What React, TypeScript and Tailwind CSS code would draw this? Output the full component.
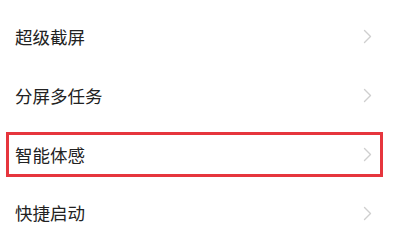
import React from 'react';

const items = [
  { label: '超级截屏', active: false },
  { label: '分屏多任务', active: false },
  { label: '智能体感', active: true },
  { label: '快捷启动', active: false },
];

function Chevron() {
  return (
    <svg width="9" height="15" viewBox="0 0 9 15" fill="none" className="shrink-0">
      <path d="M1.5 1.5 L7.5 7.5 L1.5 13.5" stroke="#cfcfcf" strokeWidth="1.4" strokeLinecap="round" strokeLinejoin="round" />
    </svg>
  );
}

export default function App() {
  return (
    <div
      className="w-[402px] h-[236px] bg-white overflow-hidden flex flex-col gap-[13px] pt-[14px] px-[6px]"
      style={{ fontFamily: '"Noto Sans CJK SC", "Noto Sans", sans-serif' }}
    >
      {items.map((item) => (
        <div
          key={item.label}
          className={`h-[46px] w-[377px] flex items-center justify-between pl-[6px] pr-[8px] border-[3px] ${
            item.active ? 'border-[#e6353d]' : 'border-transparent'
          }`}
        >
          <span className="text-[17.5px] leading-none text-[#222222]">{item.label}</span>
          <Chevron />
        </div>
      ))}
    </div>
  );
}
